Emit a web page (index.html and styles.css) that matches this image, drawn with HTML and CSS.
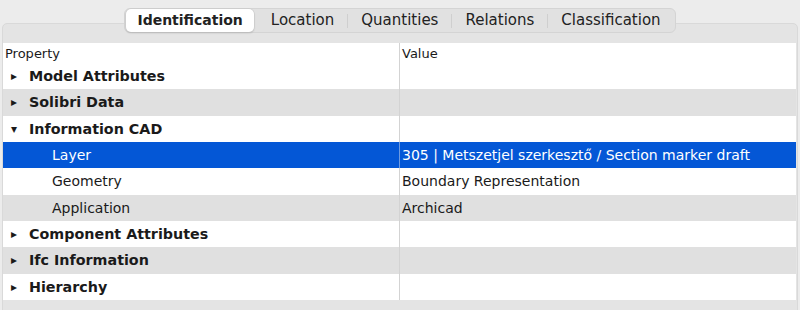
FILE: index.html
```html
<!DOCTYPE html>
<html lang="hu">
  <head>
    <meta charset="UTF-8" />
    <title>Properties</title>
    <link rel="stylesheet" href="styles.css">
  </head>
  <body>
    <div class="tabs">
      <span class="tab active">Identification</span>
      <span class="tab">Location</span>
      <span class="sep"></span>
      <span class="tab">Quantities</span>
      <span class="sep"></span>
      <span class="tab">Relations</span>
      <span class="sep"></span>
      <span class="tab">Classification</span>
    </div>

    <div class="panel">
      <div class="table">
        <div class="row head">
          <div class="cell">Property</div>
          <div class="cell">Value</div>
        </div>

        <div class="row group">
          <div class="cell"><span class="arrow">&#9656;</span>Model Attributes</div>
          <div class="cell"></div>
        </div>
        <div class="row group odd">
          <div class="cell"><span class="arrow">&#9656;</span>Solibri Data</div>
          <div class="cell"></div>
        </div>
        <div class="row group">
          <div class="cell"><span class="arrow">&#9662;</span>Information CAD</div>
          <div class="cell"></div>
        </div>
        <div class="row child selected">
          <div class="cell">Layer</div>
          <div class="cell">305 | Metszetjel szerkesztő / Section marker draft</div>
        </div>
        <div class="row child">
          <div class="cell">Geometry</div>
          <div class="cell">Boundary Representation</div>
        </div>
        <div class="row child odd">
          <div class="cell">Application</div>
          <div class="cell">Archicad</div>
        </div>
        <div class="row group">
          <div class="cell"><span class="arrow">&#9656;</span>Component Attributes</div>
          <div class="cell"></div>
        </div>
        <div class="row group odd">
          <div class="cell"><span class="arrow">&#9656;</span>Ifc Information</div>
          <div class="cell"></div>
        </div>
        <div class="row group">
          <div class="cell"><span class="arrow">&#9656;</span>Hierarchy</div>
          <div class="cell"></div>
        </div>
      </div>
    </div>
  </body>
</html>
```

FILE: styles.css
```css
/* Page */
body {
  margin: 0;
  height: 310px;
  background-color: #ececec;
  font-family: "DejaVu Sans", "Noto Sans", sans-serif;
  color: #1a1a1a;
  overflow: hidden;
}

/* Segmented tab control */
.tabs {
  display: flex;
  align-items: center;
  width: max-content;
  margin: 8px auto -10px;
  height: 23px;
  padding: 0 1px;
  background-color: #e1e1e1;
  border: 1px solid #d4d4d4;
  border-radius: 6px;
  position: relative;
  z-index: 1;
}

.tab {
  font-size: 15px;
  padding: 0 13px;
  line-height: 23px;
  color: #222;
}

.tab.active {
  background-color: white;
  font-size: 14px;
  font-weight: bold;
  border-radius: 5px;
  box-shadow: 0 0 0 0.5px #c8c8c8, 0 1px 2px rgba(0, 0, 0, 0.2);
  padding: 0 11px;
  margin-right: 4px;
}

.sep {
  width: 1px;
  height: 14px;
  background-color: #cfcfcf;
}

/* Group box */
.panel {
  margin: 0 2px;
  padding: 19px 1px 30px 0;
  background-color: #e4e4e4;
  border: 1px solid #d9d9d9;
  border-radius: 5px;
}

/* Property table */
.table {
  background-color: white;
}

.row {
  display: grid;
  grid-template-columns: 396px 1fr;
  height: 26.33px;
  align-items: center;
  font-size: 14px;
}

.row.head {
  height: 20px;
  font-size: 13px;
}

.cell {
  padding-left: 2px;
  height: 100%;
  display: flex;
  align-items: center;
  white-space: nowrap;
}

.cell + .cell {
  border-left: 1px solid #d3d3d3;
  padding-left: 2px;
}

.row.odd {
  background-color: #e0e0e0;
}

.group .cell:first-child {
  font-weight: bold;
  font-size: 14.3px;
}

.arrow {
  display: inline-block;
  width: 18px;
  padding-left: 6px;
  font-size: 12px;
}

.child .cell:first-child {
  padding-left: 49px;
}

.row.selected {
  background-color: #0457d6;
  color: white;
}

.row.selected .cell + .cell {
  border-left-color: #6f9be0;
}
```
